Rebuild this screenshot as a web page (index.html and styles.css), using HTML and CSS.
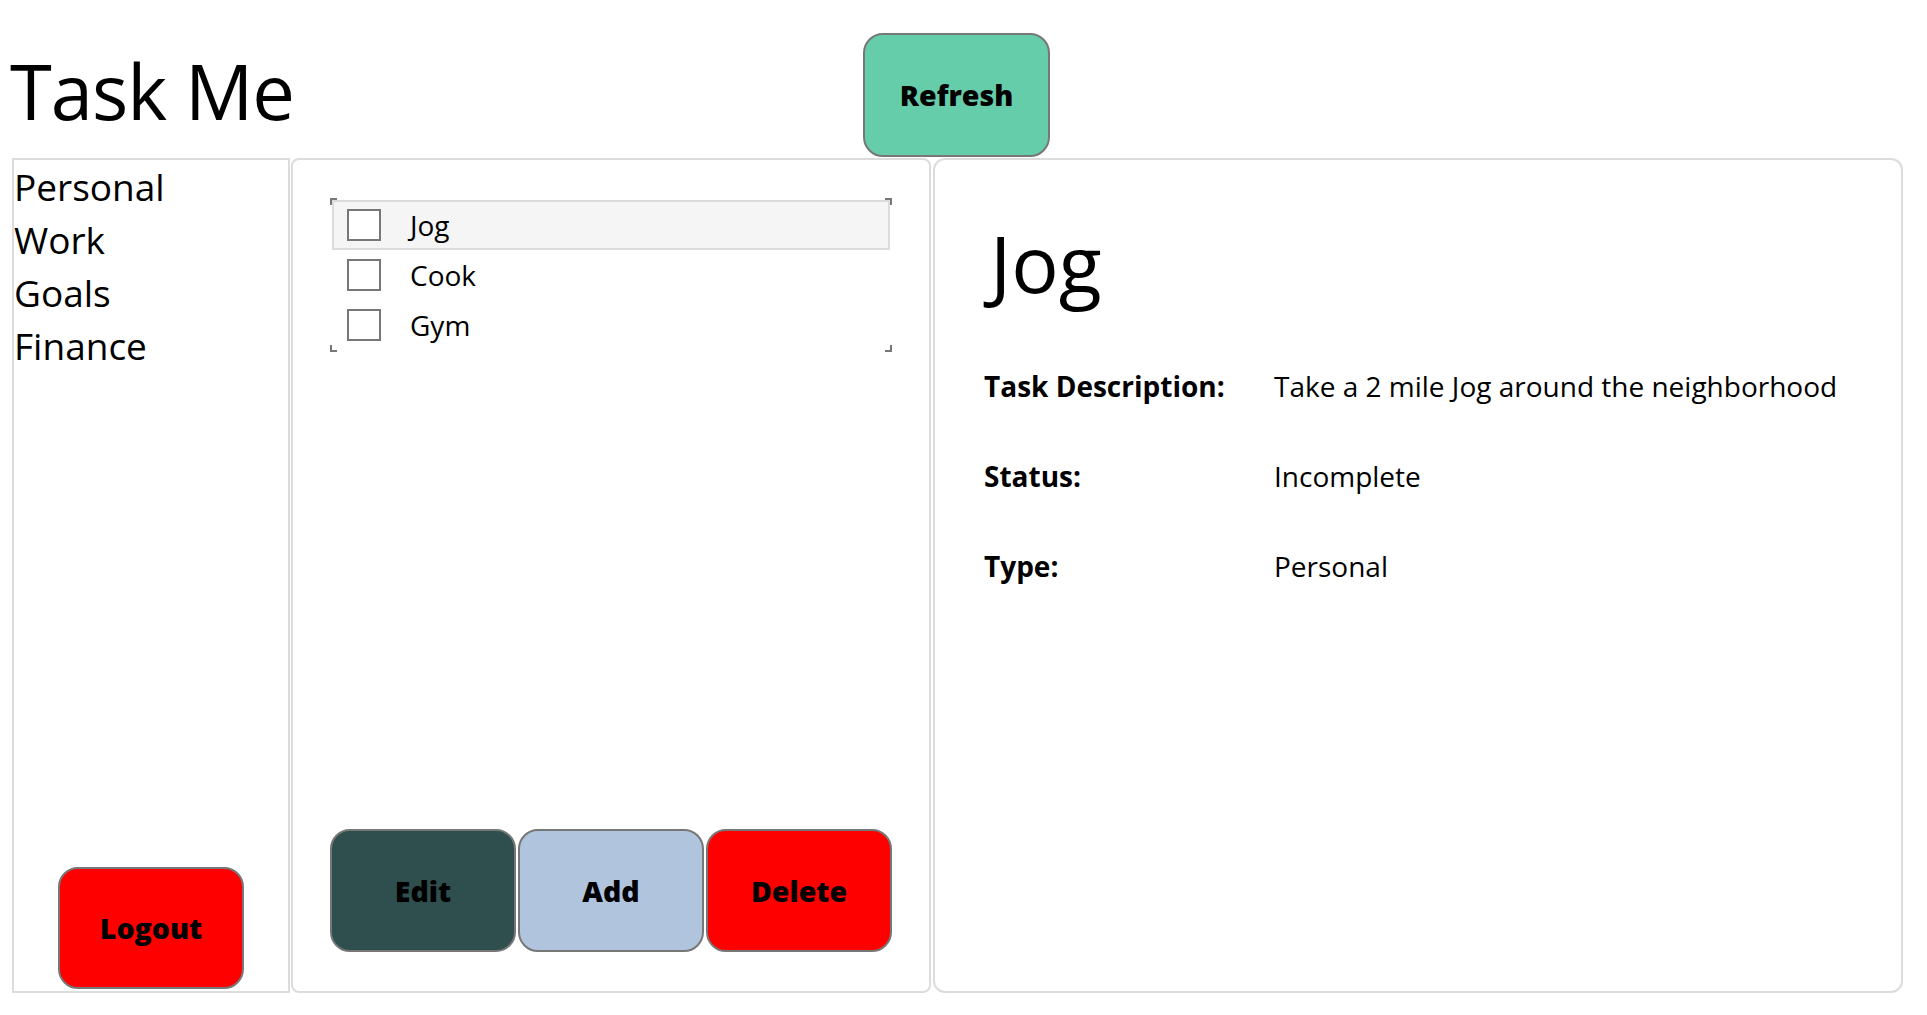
FILE: index.html
```html
<!DOCTYPE html>
<html lang="en">
<head>
<meta charset="utf-8">
<title>Task Me</title>
<link rel="stylesheet" href="styles.css">
</head>
<body>
<div class="app">
  <header class="header">
    <h1 class="title">Task Me</h1>
    <button class="btn btn-refresh">Refresh</button>
  </header>
  <main class="panels">
    <nav class="sidebar">
      <ul class="cats">
        <li>Personal</li>
        <li>Work</li>
        <li>Goals</li>
        <li>Finance</li>
      </ul>
      <button class="btn btn-logout">Logout</button>
    </nav>
    <section class="tasks">
      <div class="tasklist">
        <span class="corner corner-tl"></span>
        <span class="corner corner-tr"></span>
        <span class="corner corner-bl"></span>
        <span class="corner corner-br"></span>
        <div class="task task-selected"><span class="check"></span><span class="task-name">Jog</span></div>
        <div class="task"><span class="check"></span><span class="task-name">Cook</span></div>
        <div class="task"><span class="check"></span><span class="task-name">Gym</span></div>
      </div>
      <div class="actions">
        <button class="btn btn-edit">Edit</button>
        <button class="btn btn-add">Add</button>
        <button class="btn btn-delete">Delete</button>
      </div>
    </section>
    <section class="detail">
      <h2 class="detail-title">Jog</h2>
      <dl class="props">
        <dt>Task Description:</dt><dd>Take a 2 mile Jog around the neighborhood</dd>
        <dt>Status:</dt><dd>Incomplete</dd>
        <dt>Type:</dt><dd>Personal</dd>
      </dl>
    </section>
  </main>
</div>
</body>
</html>
```
FILE: styles.css
```css
* { box-sizing: border-box; }
body {
  margin: 0;
  background: #fff;
  color: #000;
  font-family: "Open Sans", "Noto Sans", sans-serif;
}
.app {
  padding: 0 24px 0 12px;
}
.header {
  display: flex;
  align-items: flex-start;
  height: 158px;
  padding-top: 33px;
}
.title {
  margin: 20px 0 0 -2px;
  width: 853px;
  font-size: 76px;
  font-weight: 400;
  line-height: 76px;
  letter-spacing: -1px;
}
.btn {
  font-family: "Open Sans", "Noto Sans", sans-serif;
  font-weight: 800;
  font-size: 28.5px;
  color: #000;
  border: 2px solid #777;
  border-radius: 20px;
  cursor: pointer;
  padding: 0;
}
.btn-refresh {
  width: 187px;
  height: 124px;
  background: #66cdaa;
}
.panels {
  display: flex;
  height: 835px;
}
.sidebar {
  width: 278px;
  border: 2px solid #dcdcdc;
  display: flex;
  flex-direction: column;
  justify-content: space-between;
  margin-right: 1px;
}
.cats {
  list-style: none;
  margin: 0;
  padding: 0;
  font-size: 37px;
  line-height: 53px;
  margin-top: 0;
}
.btn-logout {
  align-self: center;
  width: 186px;
  height: 122px;
  margin-bottom: 2px;
  background: #ff0000;
}
.tasks {
  width: 640px;
  border: 2px solid #dcdcdc;
  border-radius: 8px;
  padding: 38px 37px 39px 37px;
  display: flex;
  flex-direction: column;
  justify-content: space-between;
  margin-right: 2px;
}
.tasklist {
  position: relative;
  padding: 2px;
  height: 154px;
}
.corner {
  position: absolute;
  width: 7px;
  height: 7px;
  border: 0 solid #777;
}
.corner-tl { top: 0; left: 0; border-top-width: 2px; border-left-width: 2px; }
.corner-tr { top: 0; right: 0; border-top-width: 2px; border-right-width: 2px; }
.corner-bl { bottom: 0; left: 0; border-bottom-width: 2px; border-left-width: 2px; }
.corner-br { bottom: 0; right: 0; border-bottom-width: 2px; border-right-width: 2px; }
.task {
  display: flex;
  align-items: center;
  height: 50px;
  padding-left: 13px;
  border: 2px solid transparent;
  font-size: 28px;
}
.task-selected {
  background: #f5f5f5;
  border-color: #dcdcdc;
}
.check {
  width: 34px;
  height: 32px;
  border: 2px solid #777;
  background: #fff;
  margin-right: 29px;
  flex: none;
}
.actions {
  display: flex;
  gap: 2px;
  height: 123px;
}
.actions .btn {
  flex: 1;
}
.btn-edit { background: #2f4f4f; }
.btn-add { background: #b0c4de; }
.btn-delete { background: #ff0000; }
.detail {
  flex: 1;
  border: 2px solid #dcdcdc;
  border-radius: 12px;
  padding: 0 0 0 49px;
}
.detail-title {
  margin: 58px 0 0 6px;
  font-size: 79px;
  font-weight: 400;
  line-height: 90px;
}
.props {
  display: grid;
  grid-template-columns: 290px 1fr;
  row-gap: 0;
  margin: 33px 0 0 0;
  font-size: 28px;
  line-height: 90px;
}
.props dt {
  font-weight: 700;
}
.props dd {
  margin: 0;
}
```
